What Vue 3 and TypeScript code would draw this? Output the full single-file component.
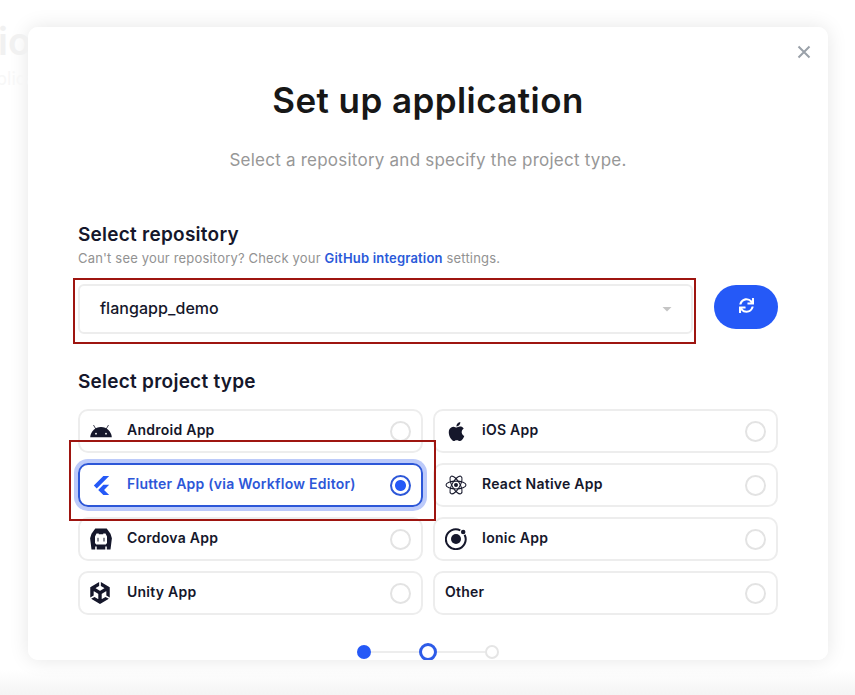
<script setup lang="ts">
import { ref } from 'vue'

interface ProjectType {
  id: string
  label: string
}

const projectTypes: ProjectType[] = [
  { id: 'android', label: 'Android App' },
  { id: 'ios', label: 'iOS App' },
  { id: 'flutter', label: 'Flutter App (via Workflow Editor)' },
  { id: 'react', label: 'React Native App' },
  { id: 'cordova', label: 'Cordova App' },
  { id: 'ionic', label: 'Ionic App' },
  { id: 'unity', label: 'Unity App' },
  { id: 'other', label: 'Other' },
]
const selected = ref('flutter')
</script>

<template>
  <div class="page">
    <div class="backdrop">
      <div class="backdrop-title">io</div>
      <div class="backdrop-sub">plica</div>
    </div>
    <main class="modal">
      <button class="close" aria-label="Close">
        <svg width="14" height="14" viewBox="0 0 14 14"><path d="M1.5 1.5 12.5 12.5M12.5 1.5 1.5 12.5" stroke="#9aa1a9" stroke-width="2" /></svg>
      </button>
      <h1>Set up application</h1>
      <p class="lead">Select a repository and specify the project type.</p>

      <h2>Select repository</h2>
      <p class="hint">Can't see your repository? Check your <a>GitHub integration</a> settings.</p>
      <div class="repo-row">
        <div class="select">
          <span>flangapp_demo</span>
          <i class="caret"></i>
          <div class="mark mark-repo"></div>
        </div>
        <button class="refresh" aria-label="Refresh">
          <svg width="15" height="15" viewBox="0 0 512 512"><path fill="#fff" d="M440.65 12.57l4 82.77A247.16 247.16 0 0 0 255.83 8C134.73 8 33.91 94.92 12.29 209.82A12 12 0 0 0 24.09 224h49.05a12 12 0 0 0 11.67-9.26 175.91 175.91 0 0 1 317-56.94l-101.46-4.86a12 12 0 0 0-12.57 12v47.41a12 12 0 0 0 12 12H500a12 12 0 0 0 12-12V12a12 12 0 0 0-12-12h-47.37a12 12 0 0 0-11.98 12.57zM255.83 432a175.61 175.61 0 0 1-146-77.8l101.8 4.87a12 12 0 0 0 12.57-12v-47.4a12 12 0 0 0-12-12H12a12 12 0 0 0-12 12V500a12 12 0 0 0 12 12h47.35a12 12 0 0 0 12-12.6l-4.15-82.57A247.17 247.17 0 0 0 255.83 504c121.11 0 221.93-86.92 243.55-201.82a12 12 0 0 0-11.8-14.18h-49.05a12 12 0 0 0-11.67 9.26A175.86 175.86 0 0 1 255.83 432z" /></svg>
        </button>
      </div>

      <h2 class="type-title">Select project type</h2>
      <div class="types">
        <div
          v-for="type in projectTypes"
          :key="type.id"
          :class="['type', `type-${type.id}`, { active: selected === type.id }]"
          @click="selected = type.id"
        >
          <span v-if="type.id !== 'other'" class="icon">
            <svg v-if="type.id === 'android'" width="22" height="22" viewBox="0 0 22 22">
              <path d="M.2 17.2C.7 11.6 5 7.1 11 7.1s10.300 4.500 10.800 10.100z" fill="currentColor" />
              <path d="M5.800 9 3.700 5.400M16.200 9l2.100-3.600" stroke="currentColor" stroke-width=".8" stroke-linecap="round" />
              <circle cx="6" cy="13.700" r=".9" fill="#fff" /><circle cx="16" cy="13.700" r=".9" fill="#fff" />
            </svg>
            <svg v-else-if="type.id === 'ios'" width="19" height="19" viewBox="0 0 24 24"><path fill="currentColor" d="M12.152 6.896c-.948 0-2.415-1.078-3.960-1.040-2.040.027-3.910 1.183-4.961 3.014-2.117 3.675-.546 9.103 1.519 12.090 1.013 1.454 2.208 3.090 3.792 3.039 1.520-.065 2.090-.987 3.935-.987 1.831 0 2.350.987 3.960.948 1.637-.026 2.676-1.480 3.676-2.948 1.156-1.688 1.636-3.325 1.662-3.415-.039-.013-3.182-1.221-3.220-4.857-.026-3.040 2.480-4.494 2.597-4.559-1.429-2.090-3.623-2.324-4.390-2.376-2-.156-3.675 1.090-4.610 1.090zM15.530 3.830c.843-1.012 1.400-2.427 1.245-3.830-1.207.052-2.662.805-3.532 1.818-.780.896-1.454 2.338-1.273 3.714 1.338.104 2.715-.688 3.559-1.701" /></svg>
            <svg v-else-if="type.id === 'flutter'" width="19" height="19" viewBox="0 0 24 24"><path fill="currentColor" d="M14.314 0L2.300 12 6 15.700 21.684.013h-7.357zm.014 11.072L7.857 17.530l6.470 6.470H21.700l-6.460-6.468 6.460-6.460h-7.370z" /></svg>
            <svg v-else-if="type.id === 'react'" width="22" height="22" viewBox="0 0 22 22" fill="none" stroke="currentColor" stroke-width="1.050">
              <ellipse cx="11" cy="11" rx="10" ry="3.900" />
              <ellipse cx="11" cy="11" rx="10" ry="3.900" transform="rotate(60 11 11)" />
              <ellipse cx="11" cy="11" rx="10" ry="3.900" transform="rotate(120 11 11)" />
              <circle cx="11" cy="11" r="2" fill="currentColor" stroke="none" />
            </svg>
            <svg v-else-if="type.id === 'cordova'" width="22" height="22" viewBox="0 0 22 22">
              <path fill="currentColor" fill-rule="evenodd" d="M5.300.5h11.400l3.800 5.300 1.400 4.400-1.400 11.300h-3.700v-3h-1.500v3H6.700v-3H5.200v3H1.500L.1 10.200l1.400-4.400zM6.500 5.500 5 8.500v6.500l1.200 1.500h9.600L17 15V8.500l-1.500-3h-2.300v.8H8.800v-.8z" />
              <path d="M8 9.800v3.700M14 9.800v3.700" stroke="currentColor" stroke-width="1" />
            </svg>
            <svg v-else-if="type.id === 'ionic'" width="22" height="22" viewBox="0 0 22 22">
              <path d="M15.300 2.400A9.900 9.900 0 1 0 19.600 6.700" fill="none" stroke="currentColor" stroke-width="2" />
              <circle cx="11" cy="11" r="5" fill="currentColor" /><circle cx="18.200" cy="4" r="2.250" fill="currentColor" />
            </svg>
            <svg v-else class="unity" width="22" height="22" viewBox="0 0 24 24"><path fill="currentColor" d="m12.929 4.294 3.800 2.193c.137.077.142.290 0 .367l-4.515 2.608a.419.419 0 0 1-.425 0L7.274 6.854c-.139-.074-.141-.293 0-.367l3.797-2.193V0L1.376 5.598v11.195l3.718-2.146v-4.385c-.003-.157.181-.269.318-.184l4.515 2.607a.425.425 0 0 1 .213.368v5.213c.003.156-.181.268-.318.184l-3.800-2.193-3.717 2.145L12 24l9.695-5.598-3.717-2.145-3.800 2.193c-.134.082-.323-.025-.318-.184v-5.213c0-.157.087-.296.214-.368l4.515-2.607c.134-.082.323.022.318.184v4.385l3.717 2.146V5.598L12.929 0Z" /></svg>
          </span>
          <span class="label">{{ type.label }}</span>
          <span class="radio"></span>
          <div v-if="type.id === 'flutter'" class="mark mark-type"></div>
        </div>
      </div>
      <div class="steps">
        <i class="dot done"></i><i class="line"></i><i class="dot current"></i><i class="line"></i><i class="dot"></i>
      </div>
    </main>
  </div>
</template>

<style>
body {
  margin: 0;
  background: #fff;
}
</style>

<style scoped>
* {
  box-sizing: border-box;
}
.page {
  position: relative;
  height: 695px;
  padding: 27px 27px 0 28px;
  overflow: hidden;
  font-family: Inter, 'Liberation Sans', sans-serif;
  color: #15172b;
  background: linear-gradient(#fff 0, #fff 670px, #f4f4f4 695px);
}
.backdrop {
  position: absolute;
  top: 17px;
  left: -2px;
  white-space: nowrap;
}
.backdrop-title {
  height: 48px;
  font-size: 38px;
  line-height: 48px;
  font-weight: 600;
  color: #f1f1f1;
}
.backdrop-sub {
  margin-left: -2px;
  font-size: 18px;
  line-height: 28px;
  color: #f7f7f7;
}
.modal {
  position: relative;
  height: 633px;
  padding: 50px 50px 0;
  overflow: hidden;
  border-radius: 10px;
  background: #fff;
}
.page::before {
  content: '';
  position: absolute;
  inset: 27px 27px 35px 28px;
  border-radius: 10px;
  box-shadow: 0 0 20px rgba(0, 0, 0, 0.1);
}
button {
  padding: 0;
  border: 0;
  background: none;
}
.close {
  position: absolute;
  top: 18px;
  right: 17px;
  width: 14px;
  height: 14px;
}
.close svg {
  display: block;
}
h1 {
  margin: 0;
  font-size: 35px;
  line-height: 46px;
  font-weight: 600;
  letter-spacing: 0.42px;
  text-align: center;
  color: #171717;
}
.lead {
  margin: 24px 0 0;
  font-size: 17px;
  line-height: 26px;
  letter-spacing: 0.23px;
  text-align: center;
  color: #979797;
}
h2 {
  margin: 48px 0 0;
  font-size: 19px;
  line-height: 28px;
  font-weight: 600;
  letter-spacing: 0.25px;
}
.hint {
  margin: -1px 0 0;
  font-size: 13px;
  line-height: 20px;
  letter-spacing: 0.18px;
  color: #929292;
}
.hint a {
  font-weight: 600;
  color: #2a59d9;
}
.repo-row {
  display: flex;
  gap: 21px;
  margin-top: 16px;
}
.select {
  position: relative;
  display: flex;
  align-items: center;
  justify-content: space-between;
  width: 615px;
  height: 50px;
  padding: 0 19px 0 20px;
  border: 2px solid #ededed;
  border-radius: 6px;
  font-size: 16px;
  font-weight: 500;
  letter-spacing: 0.05px;
}
.select span {
  padding-bottom: 2px;
}
.caret {
  width: 10px;
  height: 5px;
  background: #c5c5c5;
  clip-path: polygon(0 0, 100% 0, 50% 100%);
}
.refresh {
  display: flex;
  align-items: center;
  justify-content: center;
  width: 64px;
  height: 44px;
  margin-top: 1px;
  padding-bottom: 3px;
  border-radius: 22px;
  background: #2559f7;
}
.mark {
  position: absolute;
  border: 2px solid #9e1510;
  pointer-events: none;
}
.mark-repo {
  inset: -8px -5px -12px -7px;
}
.mark-type {
  inset: -25px -15px -16px -11px;
}
.type-title {
  margin-top: 34px;
}
.types {
  display: grid;
  grid-template-columns: 1fr 1fr;
  gap: 10px;
  margin-top: 13px;
}
.type {
  position: relative;
  display: flex;
  align-items: center;
  height: 44px;
  padding: 0 10px;
  border: 2px solid #ededed;
  border-radius: 10px;
  font-size: 14px;
  font-weight: 600;
  letter-spacing: 0.25px;
}
.type.active {
  z-index: 1;
  border-color: #2d57d8;
  color: #2d57d8;
  box-shadow: 0 0 0 4px #bccafa;
}
.icon {
  display: flex;
  justify-content: center;
  width: 22px;
  margin-right: 15px;
}
.icon svg {
  flex: none;
}
.icon .unity {
  margin-right: 2px;
}
.type-flutter .icon svg {
  color: #2559f7;
}
.label {
  padding-bottom: 3px;
}
.radio {
  width: 21px;
  height: 21px;
  margin-left: auto;
  border: 2px solid #e3e3e3;
  border-radius: 50%;
}
.active .radio {
  border-color: #2d57d8;
  background: radial-gradient(circle, #2559f7 5px, transparent 6px);
}
.steps {
  display: flex;
  align-items: center;
  justify-content: center;
  height: 18px;
  margin-top: 28px;
}
.dot {
  width: 14px;
  height: 14px;
  border: 2px solid #e5e5e5;
  border-radius: 50%;
}
.done {
  border-color: #2559f7;
  background: #2559f7;
}
.current {
  width: 18px;
  height: 18px;
  border: 3px solid #2d5be8;
}
.line {
  width: 48px;
  height: 2px;
  background: #ededed;
}
</style>
